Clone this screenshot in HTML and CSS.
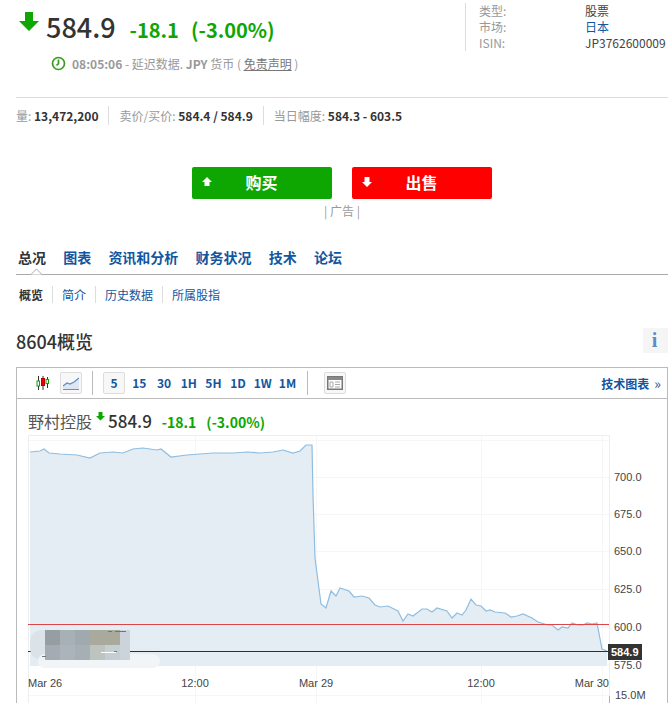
FILE: index.html
```html
<!DOCTYPE html>
<html lang="zh">
<head>
<meta charset="utf-8">
<title>8604概览</title>
<link rel="stylesheet" href="styles.css">
</head>
<body>
<div class="page">
  <header class="quote">
    <div class="quote-main">
      <div class="price-row">
        <svg class="down-arrow" width="20" height="20" viewBox="0 0 20 20"><path d="M6 0h8v9h6L10 19 0 9h6z"/></svg>
        <span class="price">584.9</span>
        <span class="change">-18.1</span>
        <span class="change pct">(-3.00%)</span>
      </div>
      <div class="time-row">
        <svg class="clock" width="15" height="15" viewBox="0 0 15 15"><circle cx="7.5" cy="7.5" r="6" /><path d="M7.5 3.5v4.2l-2 1.6"/></svg>
        <b>08:05:06</b><span>&nbsp;- 延迟数据. </span><b>JPY</b><span>&nbsp;货币 ( </span><u>免责声明</u><span>&nbsp;)</span>
      </div>
    </div>
    <dl class="meta">
      <dt>类型:</dt><dd>股票</dd>
      <dt>市场:</dt><dd class="link">日本</dd>
      <dt>ISIN:</dt><dd>JP3762600009</dd>
    </dl>
  </header>

  <div class="stats">
    <span class="stat first">量: <b>13,472,200</b></span>
    <span class="stat">卖价/买价: <b>584.4 / 584.9</b></span>
    <span class="stat">当日幅度: <b>584.3 - 603.5</b></span>
  </div>

  <div class="trade">
    <a class="btn buy"><svg width="10" height="10" viewBox="0 0 10 10"><path d="M5 0l5 5H7.5v4h-5V5H0z"/></svg><span>购买</span></a>
    <a class="btn sell"><svg width="10" height="10" viewBox="0 0 10 10"><path d="M2.5 0h5v5H10L5 10 0 5h2.5z"/></svg><span>出售</span></a>
  </div>
  <div class="ad">| 广告 |</div>

  <nav class="tabs">
    <a class="tab active">总况<svg class="caret" width="13" height="7" viewBox="0 0 13 7"><path d="M1 6.5l5.5-5.5 5.5 5.5"/></svg></a>
    <a class="tab">图表</a>
    <a class="tab">资讯和分析</a>
    <a class="tab">财务状况</a>
    <a class="tab">技术</a>
    <a class="tab">论坛</a>
  </nav>
  <nav class="subtabs">
    <a class="sub active">概览</a>
    <a class="sub">简介</a>
    <a class="sub">历史数据</a>
    <a class="sub">所属股指</a>
  </nav>

  <div class="section-head">
    <h2>8604概览</h2>
    <span class="info">i</span>
  </div>

  <section class="chart-box">
    <div class="toolbar">
      <svg class="tool-candle" width="14" height="14" viewBox="0 0 14 14">
        <path class="wick" d="M2.5 0v14M7 0v14M11.5 1v11"/>
        <rect class="cg" x="1" y="5" width="2.5" height="5"/>
        <rect class="cr" x="5.5" y="2.5" width="3" height="7"/>
        <rect class="cg" x="10" y="3.5" width="2.5" height="4"/>
      </svg>
      <span class="tool-btn line-btn">
        <svg width="16" height="13" viewBox="0 0 16 13"><path class="area" d="M0 9l4-3 3 1 4-2 5-4v12H0z"/><path class="stroke" d="M0 9l4-3 3 1 4-2 5-4"/><path class="base" d="M0 12.5h16"/></svg>
      </span>
      <i class="tool-sep"></i>
      <span class="range-group">
        <span class="tool-btn range on">5</span>
        <a class="range">15</a><a class="range">30</a><a class="range">1H</a><a class="range">5H</a><a class="range">1D</a><a class="range">1W</a><a class="range">1M</a>
      </span>
      <i class="tool-sep second"></i>
      <span class="tool-btn table-btn">
        <svg width="16" height="14" viewBox="0 0 16 14"><rect class="tbl" x=".75" y=".75" width="14.5" height="12.5"/><rect class="tbl-head" x="1" y="1" width="14" height="3"/><path class="tbl-row" d="M3 6h3v5H3zM8 6h5M8 8.5h5M8 11h5"/></svg>
      </span>
      <a class="tech-link">技术图表<span class="chev">»</span></a>
    </div>
    <div class="chart-title">
      <span class="name">野村控股</span>
      <svg class="mini-arrow" width="9" height="9" viewBox="0 0 9 9"><path d="M2.5 0h4v4H9L4.5 8.5 0 4h2.5z"/></svg>
      <span class="mini-price">584.9</span>
      <span class="mini-change">-18.1</span>
      <span class="mini-change pct">(-3.00%)</span>
    </div>
    <svg class="plot" width="650" height="270" viewBox="17 434 650 270">
      <rect class="frame" x="28.5" y="435.5" width="581" height="270"/>
      <path class="grid" d="M29 440.5h580M29 477.5h580M29 514.5h580M29 551.5h580M29 589.5h580M29 627.5h580M29 665.5h580M29 695.5h580M195.5 436v268M316.5 436v268M481.5 436v268M602.5 436v268"/>
      <path class="fill" d="M30 452L40 451 44 449 49 453 60 454 77 455 90 458 100 453 113 452 123 453 133 449 143 448 157 450 161 449 171 457 187 455 213 453 233 453 247 452 260 453 273 452 283 450 293 453 300 451 306 445 312 445 313 495 315 558 321 604 326 608 331 591 336 596 340 588 349 591 354 597 362 596 369 598 375 605 380 607 388 606 398 611 403 621 408 614 413 616 422 609 427 609 432 612 437 608 447 611 452 618 457 613 462 615 466 610 471 599 476 605 481 606 486 611 490 610 495 612 505 613 511 617 517 616 523 614 532 618 538 622 548 625 552 625 558 630 562 627 568 628 572 623 578 625 583 625 587 623 592 624 597 623 602 649 607 651V666H30z"/>
      <path class="line" d="M30 452L40 451 44 449 49 453 60 454 77 455 90 458 100 453 113 452 123 453 133 449 143 448 157 450 161 449 171 457 187 455 213 453 233 453 247 452 260 453 273 452 283 450 293 453 300 451 306 445 312 445 313 495 315 558 321 604 326 608 331 591 336 596 340 588 349 591 354 597 362 596 369 598 375 605 380 607 388 606 398 611 403 621 408 614 413 616 422 609 427 609 432 612 437 608 447 611 452 618 457 613 462 615 466 610 471 599 476 605 481 606 486 611 490 610 495 612 505 613 511 617 517 616 523 614 532 618 538 622 548 625 552 625 558 630 562 627 568 628 572 623 578 625 583 625 587 623 592 624 597 623 602 649 607 651"/>
      <path class="prev" d="M28 624.500h581"/>
      <path class="last" d="M28 651.500h581"/>
      <rect class="blur-a" x="30" y="630" width="100" height="30" rx="12"/>
      <rect class="blur-b" x="38" y="654" width="122" height="14" rx="7"/>
      <rect class="m1" x="45" y="630" width="15" height="15"/><rect class="m2" x="60" y="630" width="15" height="15"/><rect class="m3" x="75" y="630" width="15" height="15"/><rect class="m4" x="90" y="630" width="30" height="15"/>
      <rect class="m5" x="45" y="645" width="15" height="15"/><rect class="m6" x="60" y="645" width="15" height="15"/><rect class="m7" x="75" y="645" width="15" height="15"/><rect class="m8" x="90" y="645" width="15" height="15"/><rect class="m9" x="105" y="645" width="15" height="15"/><rect class="m10" x="120" y="630" width="10" height="30"/>
      <path class="speck-dark" d="M108 631.500h4M115 631.500h11M42 656.500h4M114 651.500h3"/>
      <path class="speck-light" d="M101 652.500h15"/>
      <text class="axis" x="28" y="687">Mar 26</text>
      <text class="axis mid" x="195" y="687">12:00</text>
      <text class="axis mid" x="316" y="687">Mar 29</text>
      <text class="axis mid" x="481" y="687">12:00</text>
      <text class="axis end" x="609" y="687">Mar 30</text>
      <text class="axis" x="614" y="481">700.0</text>
      <text class="axis" x="614" y="518">675.0</text>
      <text class="axis" x="614" y="555">650.0</text>
      <text class="axis" x="614" y="593">625.0</text>
      <text class="axis" x="614" y="631">600.0</text>
      <text class="axis" x="614" y="669">575.0</text>
      <text class="axis" x="615" y="699">15.0M</text>
      <rect class="tag" x="608" y="644" width="34" height="16"/>
      <text class="tag-text" x="611" y="656">584.9</text>
      <path class="vol" d="M609.500 696v8"/>
    </svg>
  </section>
</div>
</body>
</html>
```

FILE: styles.css
```css
html, body {
  margin: 0;
  height: 703px;
  overflow: hidden;
  background: #fff;
}
.page {
  width: 652px;
  margin-left: 16px;
  font-family: "Noto Sans CJK SC", "Noto Sans", sans-serif;
  color: #333;
  font-size: 12px;
}
a { color: #1256a0; text-decoration: none; }

/* quote header */
.quote {
  display: flex;
  justify-content: space-between;
  height: 97px;
  border-bottom: 1px solid #ddd;
}
.quote-main { padding: 12px 0 0 3px; }
.price-row { display: flex; align-items: baseline; height: 38px; margin-top: -3px; }
.down-arrow { align-self: flex-start; fill: #0ea600; margin: 3px 7px 0 0; }
.price { font-size: 27px; font-weight: 500; line-height: 36px; color: #333; margin-right: 14px; }
.change { font-size: 20px; font-weight: 700; color: #0ea600; line-height: 36px; }
.change.pct { margin-left: 12px; }
.time-row {
  display: flex;
  align-items: center;
  margin: 9px 0 0 32px;
  font-size: 12px;
  line-height: 15px;
  color: #999;
  white-space: pre;
}
.time-row b { font-weight: 700; }
.time-row u { color: #777; }
.clock { margin-right: 6px; fill: none; stroke: #3a9a1e; stroke-width: 1.700; }
.meta {
  display: grid;
  grid-template-columns: 106px 1fr;
  grid-auto-rows: 16px;
  align-content: start;
  width: 203px;
  height: 48px;
  margin: 3px 0 0;
  padding-left: 13px;
  border-left: 1px solid #ddd;
  box-sizing: border-box;
  line-height: 16px;
}
.meta dt { color: #999; }
.meta dd { margin: 0; color: #444; }
.meta dd.link { color: #1256a0; }

/* stats */
.stats { display: flex; margin-top: 8px; height: 19px; align-items: center; font-size: 12px; color: #999; }
.stat { padding: 0 10px; border-left: 1px solid #ddd; line-height: 19px; white-space: nowrap; }
.stat.first { padding-left: 0; border-left: 0; }
.stat b { color: #333; font-weight: 700; }

/* trade */
.trade { display: flex; justify-content: center; gap: 20px; margin: 42px 0 0 -1px; }
.btn {
  position: relative;
  display: flex;
  align-items: center;
  justify-content: center;
  width: 140px;
  height: 32px;
  border-radius: 2px;
  color: #fff;
  font-size: 16px;
  font-weight: 700;
}
.btn svg { position: absolute; left: 10px; top: 10px; fill: #fff; }
.btn span { padding-bottom: 3px; }
.btn.buy { background: #0ea600; }
.btn.sell { background: #ff0000; }
.ad { text-align: center; color: #999; font-size: 12px; line-height: 16px; margin: 4px 0 0 0; }

/* tabs */
.tabs {
  display: flex;
  gap: 17.200px;
  height: 31px;
  margin-top: 24px;
  padding-left: 2px;
  border-bottom: 1px solid #aaa;
}
.tab { position: relative; font-size: 14px; font-weight: 700; line-height: 22px; padding-top: 3px; height: 28px; }
.tab.active { color: #333; }
.caret { position: absolute; left: 12px; bottom: -1px; fill: #fff; stroke: #aaa; stroke-width: 1; }
.subtabs { display: flex; margin-top: 11px; padding-left: 3px; height: 17px; }
.sub { font-size: 12px; line-height: 17px; padding: 0 9px; border-left: 1px solid #ddd; }
.sub.active { padding-left: 0; border-left: 0; color: #333; font-weight: 700; }
.section-head {
  display: flex;
  justify-content: space-between;
  align-items: flex-start;
  margin-top: 16px;
  height: 48px;
}
.section-head h2 { margin: 10px 0 0; font-size: 18px; font-weight: 500; line-height: 24px; color: #333; }
.info {
  width: 25px;
  height: 25px;
  margin-top: 9px;
  background: #f5f5f5;
  color: #5b8cc6;
  font: 700 20px/25px "Liberation Serif", serif;
  text-align: center;
  text-indent: -2px;
}

/* chart */
.chart-box { border: 1px solid #bbb; border-bottom: 0; height: 340px; }
.toolbar {
  display: flex;
  align-items: center;
  height: 30px;
  border-bottom: 1px solid #bbb;
}
.tool-candle { margin-left: 19px; }
.wick { stroke: #333; stroke-width: 1; fill: none; }
.cg { fill: #fff; stroke: #0ea600; stroke-width: 1; }
.cr { fill: #e00; stroke: #b00; stroke-width: 1; }
.tool-btn {
  display: flex;
  align-items: center;
  justify-content: center;
  width: 20px;
  height: 20px;
  border: 1px solid #ddd;
  border-radius: 2px;
  background: #f7f7f7;
}
.line-btn { margin-left: 10px; }
.area { fill: #dde6f1; }
.stroke { fill: none; stroke: #5b8cc6; stroke-width: 1.2; }
.base { stroke: #7a8ca3; fill: none; }
.tool-sep { width: 1px; height: 24px; background: #bbb; margin-left: 10px; }
.tool-sep.second { margin-left: 7px; }
.range-group { display: flex; align-items: center; margin-left: 10px; }
.range { width: 24.700px; text-align: center; font-size: 12px; font-weight: 700; color: #1256a0; line-height: 20px; }
.tool-btn.range { width: 20px; margin-right: 2px; }
.table-btn { margin-left: 16px; }
.tbl { fill: #fff; stroke: #777; stroke-width: 1.500; }
.tbl-head { fill: #888; }
.tbl-row { fill: none; stroke: #aaa; stroke-width: 1; }
.tech-link { margin-left: auto; margin-right: 6px; font-size: 12px; font-weight: 700; }
.chev { font-weight: 400; font-size: 14px; margin-left: 5px; }
.chart-title { display: flex; align-items: baseline; height: 35px; padding-left: 11px; box-sizing: border-box; padding-top: 8px; line-height: 27px; }
.name { font-size: 16px; color: #555; }
.mini-arrow { align-self: flex-start; fill: #0ea600; margin: 5px 3px 0 4px; }
.mini-price { font-size: 17px; font-weight: 500; margin-right: 10px; }
.mini-change { font-size: 14px; font-weight: 700; color: #0ea600; }
.mini-change.pct { margin-left: 10px; }
.plot { display: block; }
.frame { fill: #fff; stroke: #eee; }
.grid { fill: none; stroke: #f6f6f6; stroke-width: 1; }
.fill { fill: #e4edf4; }
.line { fill: none; stroke: #8fbde0; stroke-width: 1.200; }
.prev { stroke: #d9474b; fill: none; }
.last { stroke: #2c2f36; fill: none; }
.axis { font: 11px "Liberation Sans", Arial, sans-serif; fill: #444; }
.axis.mid { text-anchor: middle; }
.axis.end { text-anchor: end; }
.tag { fill: #333; }
.tag-text { font: 700 11px "Liberation Sans", Arial, sans-serif; fill: #fff; }
.vol { stroke: #8fbde0; fill: none; }
.blur-a { fill: #dbe2e8; }
.blur-b { fill: #f1f5f8; }
.m1 { fill: #969ea4; }
.m2 { fill: #a7b0b5; }
.m3 { fill: #9fa9ae; }
.m4 { fill: #a9a99c; }
.m5 { fill: #a2acb2; }
.m6 { fill: #abb4ba; }
.m7 { fill: #a5afb4; }
.m8 { fill: #bcc3c1; }
.m9 { fill: #c4cfd3; }
.m10 { fill: #cbd4da; }
.speck-dark { stroke: #6e767c; fill: none; }
.speck-light { stroke: #fff; fill: none; }
```
